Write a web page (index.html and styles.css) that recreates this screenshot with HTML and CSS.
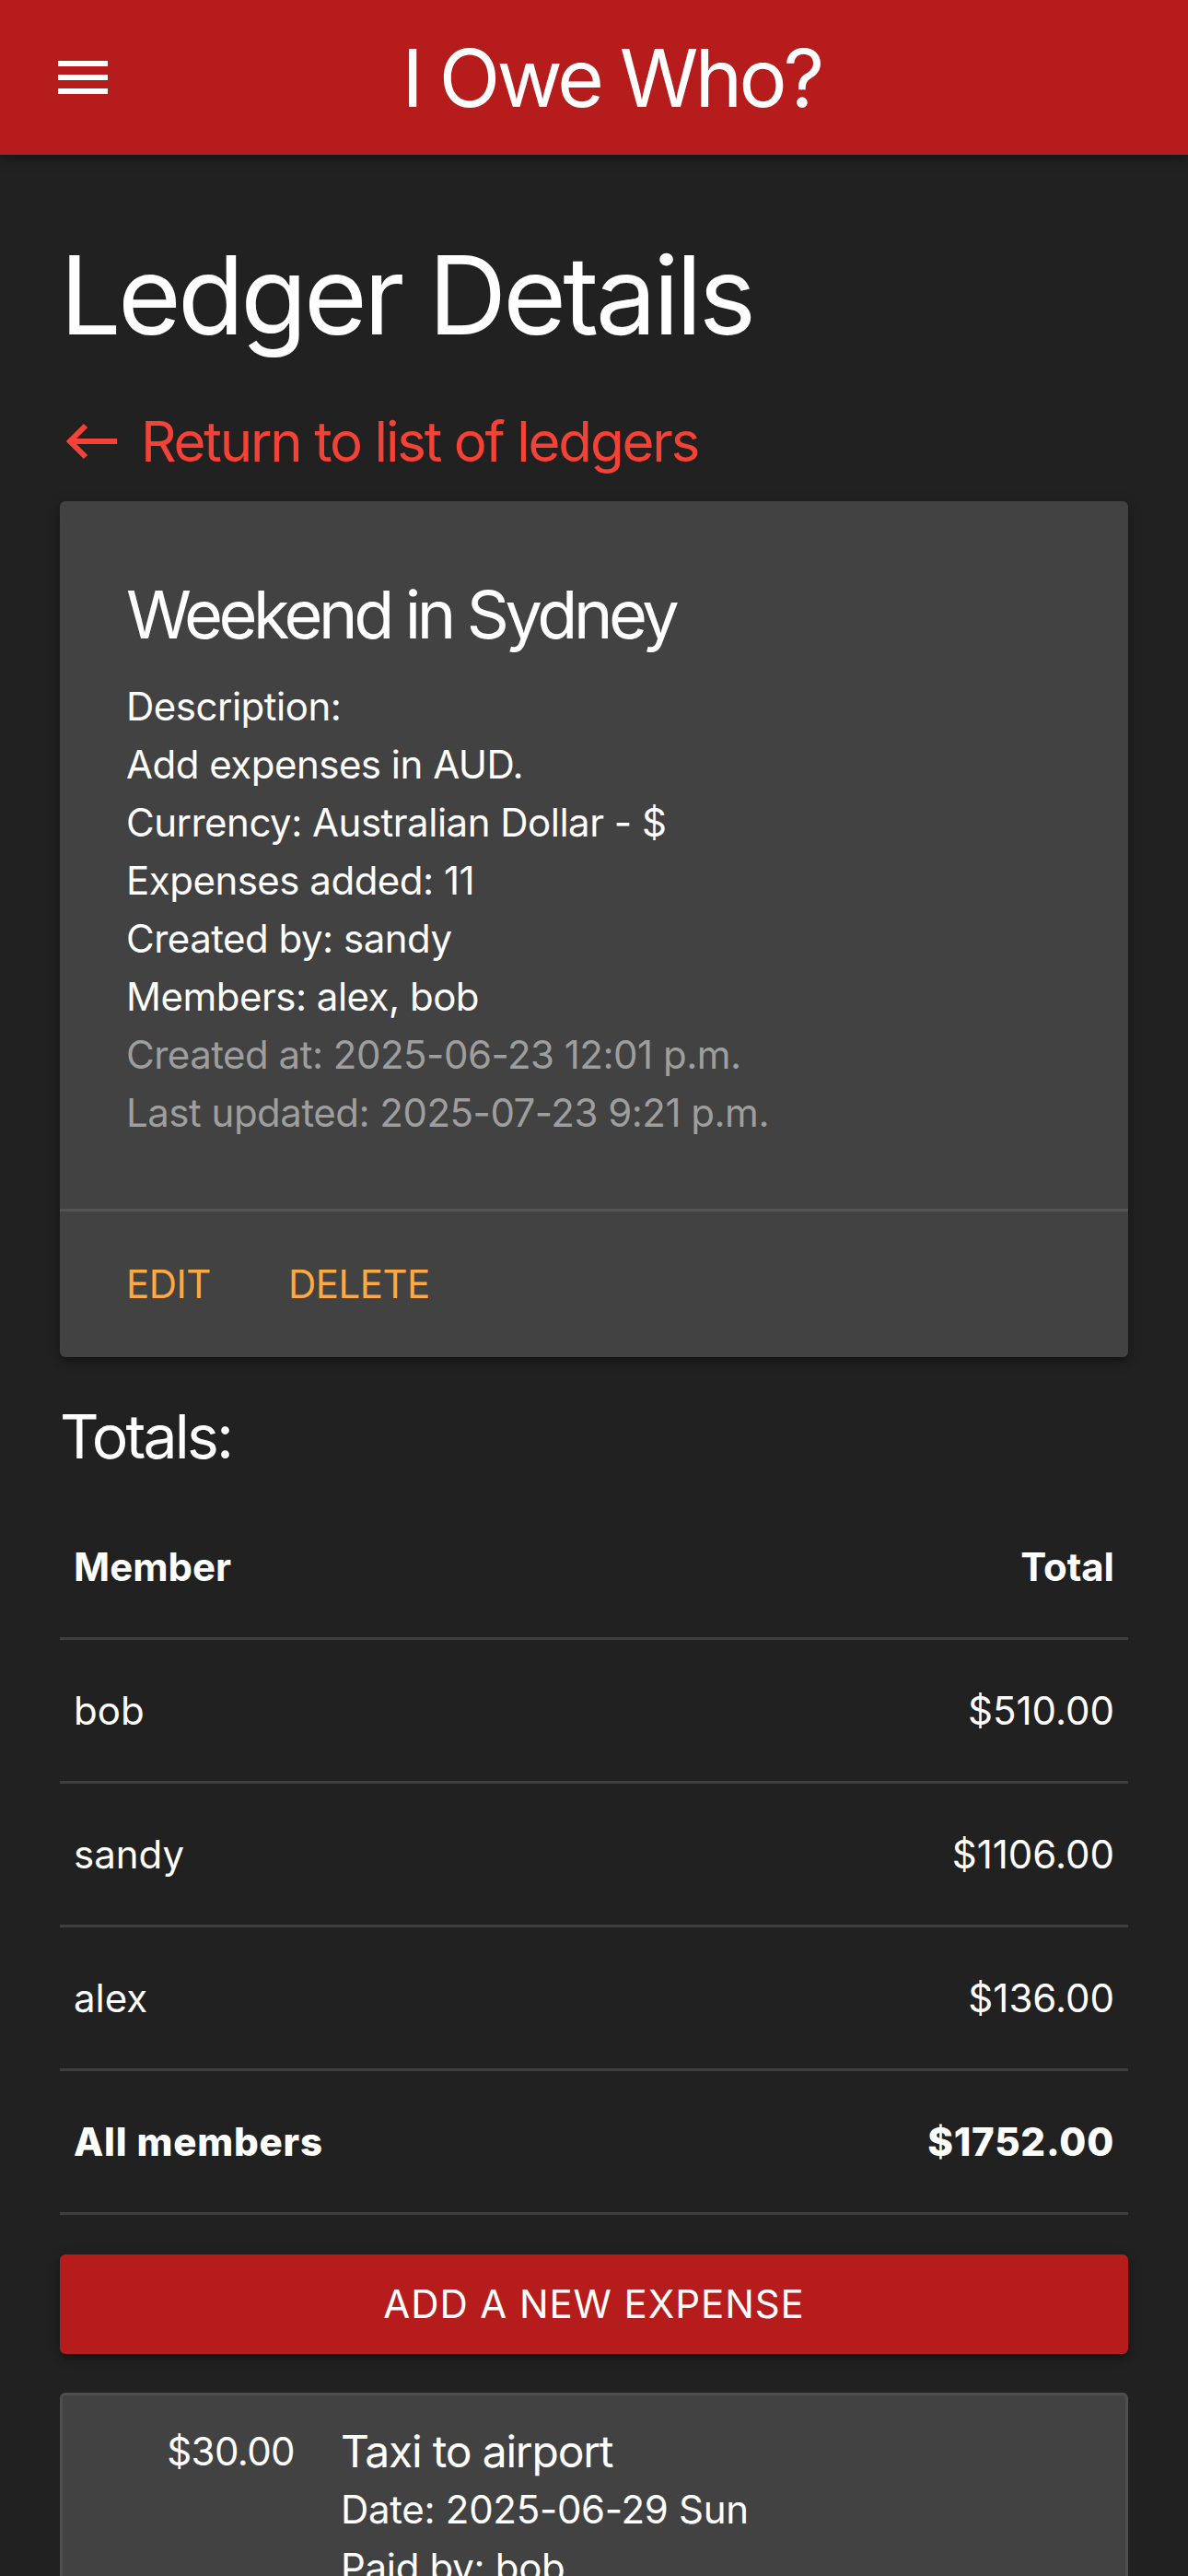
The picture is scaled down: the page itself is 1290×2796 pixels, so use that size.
FILE: index.html
```html
<!DOCTYPE html>
<html lang="en">
<head>
<meta charset="utf-8">
<title>I Owe Who? - Ledger Details</title>
<link rel="stylesheet" href="styles.css">
</head>
<body>
<header class="topbar">
  <button class="menu-btn" aria-label="Menu">
    <svg width="54" height="36" viewBox="0 0 54 36" aria-hidden="true">
      <rect x="0" y="0" width="54" height="6" fill="#fff"/>
      <rect x="0" y="15" width="54" height="6" fill="#fff"/>
      <rect x="0" y="30" width="54" height="6" fill="#fff"/>
    </svg>
  </button>
  <div class="brand">I Owe Who?</div>
</header>

<main class="container">
  <h1 class="page-title">Ledger Details</h1>
  <a class="back-link" href="#">
    <svg class="back-arrow" width="58" height="42" viewBox="0 0 58 42" aria-hidden="true">
      <path d="M4 21 H56" stroke="#f44336" stroke-width="6" fill="none"/>
      <path d="M22 4 L5 21 L22 38" stroke="#f44336" stroke-width="6" fill="none"/>
    </svg>
    <span>Return to list of ledgers</span>
  </a>

  <section class="card">
    <div class="card-content">
      <h2 class="card-title">Weekend in Sydney</h2>
      <p class="line">Description:</p>
      <p class="line">Add expenses in AUD.</p>
      <p class="line">Currency: Australian Dollar - $</p>
      <p class="line">Expenses added: 11</p>
      <p class="line">Created by: sandy</p>
      <p class="line">Members: alex, bob</p>
      <p class="line muted">Created at: 2025-06-23 12:01 p.m.</p>
      <p class="line muted">Last updated: 2025-07-23 9:21 p.m.</p>
    </div>
    <div class="card-action">
      <a href="#" class="action-link">Edit</a>
      <a href="#" class="action-link">Delete</a>
    </div>
  </section>

  <h3 class="section-title">Totals:</h3>
  <table class="totals">
    <thead>
      <tr><th class="left">Member</th><th class="right">Total</th></tr>
    </thead>
    <tbody>
      <tr><td>bob</td><td class="right">$510.00</td></tr>
      <tr><td>sandy</td><td class="right">$1106.00</td></tr>
      <tr><td>alex</td><td class="right">$136.00</td></tr>
      <tr class="sum"><td>All members</td><td class="right">$1752.00</td></tr>
    </tbody>
  </table>

  <a href="#" class="btn-add">Add a new expense</a>

  <article class="expense">
    <div class="amount">$30.00</div>
    <div class="details">
      <div class="exp-title">Taxi to airport</div>
      <div class="exp-line">Date: 2025-06-29 Sun</div>
      <div class="exp-line">Paid by: bob</div>
      <div class="exp-line">Split: alex, bob, sandy</div>
    </div>
  </article>
</main>
</body>
</html>
```

FILE: styles.css
```css
* { box-sizing: border-box; }

html, body {
  margin: 0;
  padding: 0;
  background: #212121;
  color: #ffffff;
  font-family: Inter, "Noto Sans", "Liberation Sans", sans-serif;
}

.topbar {
  position: relative;
  height: 168px;
  background: #b71c1c;
  display: flex;
  align-items: center;
  justify-content: center;
  box-shadow: 0 6px 6px rgba(0,0,0,0.14), 0 3px 15px rgba(0,0,0,0.2);
}

.menu-btn {
  position: absolute;
  left: 63px;
  top: 66px;
  width: 54px;
  height: 36px;
  padding: 0;
  border: 0;
  background: none;
  display: block;
}
.menu-btn svg { display: block; }

.brand {
  font-size: 87px;
  line-height: 168px;
  padding-top: 2px;
  margin-left: 38px;
  color: #fff;
  font-weight: 400;
  letter-spacing: -3.8px;
}

.container {
  padding: 0 65px;
}

.page-title {
  margin: 82px 0 0;
  font-size: 118px;
  line-height: 140px;
  font-weight: 400;
  letter-spacing: -3.8px;
}

.back-link {
  margin-top: 47px;
  display: flex;
  align-items: center;
  height: 84px;
  color: #f44336;
  text-decoration: none;
  font-size: 60px;
  line-height: 84px;
  letter-spacing: -2.2px;
}
.back-arrow {
  margin-left: 6px;
  margin-right: 24px;
  flex: none;
}

.card {
  margin-top: 23px;
  background: #424242;
  border-radius: 6px;
  box-shadow: 0 6px 6px 0 rgba(0,0,0,0.14), 0 9px 3px -6px rgba(0,0,0,0.12), 0 3px 15px 0 rgba(0,0,0,0.2);
}

.card-content {
  padding: 72px 72px 73px;
}

.card-title {
  margin: 3px 0 20px;
  font-size: 72px;
  line-height: 96px;
  font-weight: 400;
  letter-spacing: -4.4px;
}

.line {
  margin: 0;
  font-size: 42px;
  line-height: 63px;
  letter-spacing: -0.5px;
}
.line.muted { color: #9e9e9e; }

.card-action {
  border-top: 3px solid rgba(160,160,160,0.2);
  padding: 48px 72px;
  display: flex;
  gap: 84px;
}
.action-link {
  color: #ffa940;
  text-decoration: none;
  text-transform: uppercase;
  font-size: 42px;
  line-height: 62px;
  letter-spacing: -0.5px;
}

.section-title {
  margin: 42px 0 0;
  font-size: 66px;
  line-height: 88px;
  font-weight: 400;
  letter-spacing: -2.8px;
}

.totals {
  margin-top: 21px;
  width: 100%;
  border-collapse: collapse;
}
.totals th, .totals td {
  padding: 45px 15px;
  font-size: 42px;
  line-height: 63px;
  border-bottom: 3px solid #3e3e3e;
}
.totals th { font-weight: 700; }
.totals .left { text-align: left; }
.totals .right { text-align: right; }
.totals .sum td { font-weight: 800; letter-spacing: 0.8px; }

.btn-add {
  margin-top: 43px;
  display: block;
  height: 108px;
  line-height: 108px;
  background: #b71c1c;
  border-radius: 6px;
  color: #fff;
  text-align: center;
  text-decoration: none;
  text-transform: uppercase;
  font-size: 42px;
  letter-spacing: 0.9px;
  box-shadow: 0 6px 6px 0 rgba(0,0,0,0.14), 0 9px 3px -6px rgba(0,0,0,0.12), 0 3px 15px 0 rgba(0,0,0,0.2);
}

.expense {
  margin-top: 42px;
  background: #424242;
  border: 3px solid #4e4e4e;
  border-radius: 6px;
  display: grid;
  grid-template-columns: 252px 1fr;
  column-gap: 50px;
  padding: 30px 0 60px;
}
.amount {
  text-align: right;
  font-size: 42px;
  line-height: 62px;
  letter-spacing: -0.6px;
}
.exp-title {
  font-size: 48px;
  line-height: 62px;
  letter-spacing: -1.2px;
}
.exp-line {
  font-size: 42px;
  line-height: 63px;
  letter-spacing: -0.3px;
}
```
